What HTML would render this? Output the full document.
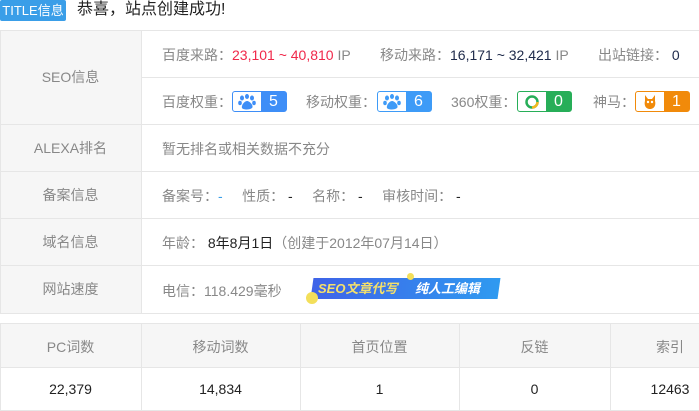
<!DOCTYPE html>
<html><head><meta charset="utf-8"><style>
*{margin:0;padding:0;box-sizing:border-box}
body{width:699px;height:411px;overflow:hidden;background:#fff;font-family:"Liberation Sans","Noto Sans CJK SC",sans-serif;font-size:13px;color:#888;position:relative}
.a{position:absolute;white-space:nowrap}
.hl{position:absolute;left:0;height:1px;background:#e6e6e6}
.vl{position:absolute;width:1px;background:#e6e6e6}
.lab{position:absolute;left:0;width:141px;text-align:center;background:#f6f6f6;color:#888;font-size:14px}
.d{color:#222}
.badge{position:absolute;height:21px;border-radius:3px;display:flex;overflow:hidden}
.badge .ic{width:28px;background:#fff;display:flex;align-items:center;justify-content:center}
.badge .n{flex:1;color:#fff;font-size:16px;text-align:center;line-height:19px}
</style></head><body>
<div class="a" style="left:0;top:0;width:66px;height:21px;background:#3a9ee8;color:#fff;font-size:13px;line-height:21px;text-align:center;border-radius:2px">TITLE信息</div>
<div class="a" style="left:77px;top:-1px;font-size:16px;color:#222;line-height:22px">恭喜，站点创建成功!</div>

<div class="hl" style="top:30px;width:699px"></div>
<div class="lab" style="top:31px;height:93px;line-height:93px">SEO信息</div>
<div class="lab" style="top:125px;height:46px;line-height:46px">ALEXA排名</div>
<div class="lab" style="top:172px;height:46px;line-height:46px">备案信息</div>
<div class="lab" style="top:219px;height:46px;line-height:46px">域名信息</div>
<div class="lab" style="top:266px;height:47px;line-height:47px">网站速度</div>
<div class="vl" style="left:141px;top:30px;height:283px"></div>
<div class="vl" style="left:0;top:30px;height:283px"></div>
<div class="hl" style="top:77px;left:142px;width:557px"></div>
<div class="hl" style="top:124px;width:699px"></div>
<div class="hl" style="top:171px;width:699px"></div>
<div class="hl" style="top:218px;width:699px"></div>
<div class="hl" style="top:265px;width:699px"></div>
<div class="hl" style="top:313px;width:699px"></div>

<div class="a" style="left:162px;top:45px;font-size:14px">百度来路：<span style="color:#f0284a">23,101 ~ 40,810</span> IP</div>
<div class="a" style="left:380px;top:45px;font-size:14px">移动来路：<span class="d" style="color:#1e2a4a">16,171 ~ 32,421</span> IP</div>
<div class="a" style="left:598px;top:45px;font-size:14px">出站链接：<span style="color:#1e2a4a">&nbsp;0</span></div>

<div class="a" style="left:162px;top:92px;font-size:14px">百度权重：</div>
<div class="badge" style="left:232px;top:91px;width:55px;border:1px solid #3e8ef7;background:#3e8ef7"><div class="ic"><svg width="18" height="16" viewBox="0 0 18 16"><g fill="#3e8ef7"><ellipse cx="4" cy="4" rx="2" ry="2.5"/><ellipse cx="9" cy="2.5" rx="2" ry="2.5"/><ellipse cx="14" cy="4" rx="2" ry="2.5"/><ellipse cx="2" cy="9" rx="1.8" ry="2.2"/><ellipse cx="16" cy="9" rx="1.8" ry="2.2"/><path d="M9 7c-3 0-6 5-5 7s8 2 10 0-2-7-5-7z"/></g></svg></div><div class="n">5</div></div>
<div class="a" style="left:306px;top:92px;font-size:14px">移动权重：</div>
<div class="badge" style="left:377px;top:91px;width:55px;border:1px solid #3e9bf7;background:#3e9bf7"><div class="ic"><svg width="18" height="16" viewBox="0 0 18 16"><g fill="#3e9bf7"><ellipse cx="4" cy="4" rx="2" ry="2.5"/><ellipse cx="9" cy="2.5" rx="2" ry="2.5"/><ellipse cx="14" cy="4" rx="2" ry="2.5"/><ellipse cx="2" cy="9" rx="1.8" ry="2.2"/><ellipse cx="16" cy="9" rx="1.8" ry="2.2"/><path d="M9 7c-3 0-6 5-5 7s8 2 10 0-2-7-5-7z"/></g></svg></div><div class="n">6</div></div>
<div class="a" style="left:451px;top:92px;font-size:14px">360权重：</div>
<div class="badge" style="left:517px;top:91px;width:55px;border:1px solid #27ae58;background:#27ae58"><div class="ic"><svg width="16" height="16" viewBox="0 0 16 16"><circle cx="8" cy="8" r="5.5" fill="none" stroke="#27ae58" stroke-width="2.5"/><path d="M8 13.5A5.5 5.5 0 0 0 13.5 8" fill="none" stroke="#f2b81e" stroke-width="2.5"/></svg></div><div class="n">0</div></div>
<div class="a" style="left:593px;top:92px;font-size:14px">神马：</div>
<div class="badge" style="left:635px;top:91px;width:55px;border:1px solid #f18a0a;background:#f18a0a"><div class="ic"><svg width="16" height="18" viewBox="0 0 16 18"><path d="M3 2l3 4h4l3-4v6c1 3 0 8-5 8S2 11 3 8z" fill="#f18a0a"/><circle cx="6" cy="9" r="1.2" fill="#fff"/><circle cx="10" cy="9" r="1.2" fill="#fff"/></svg></div><div class="n">1</div></div>

<div class="a" style="left:162px;top:139px;font-size:14px">暂无排名或相关数据不充分</div>
<div class="a" style="left:162px;top:186px;font-size:14px">备案号：<span style="color:#3a9ee8">-</span>&nbsp;&nbsp;&nbsp;&nbsp;&nbsp;性质：&nbsp;<span class="d">-</span>&nbsp;&nbsp;&nbsp;&nbsp;&nbsp;名称：&nbsp;<span class="d">-</span>&nbsp;&nbsp;&nbsp;&nbsp;&nbsp;审核时间：&nbsp;<span class="d">-</span></div>
<div class="a" style="left:162px;top:233px;font-size:14px">年龄：&nbsp;<span class="d">8年8月1日</span>（创建于2012年07月14日）</div>
<div class="a" style="left:162px;top:281px;font-size:14px">电信：118.429毫秒</div>

<div class="a" style="left:312px;top:278px;width:187px;height:21px;background:linear-gradient(90deg,#3f63e8,#2f9af0);transform:skewX(-8deg)"></div>
<div class="a" style="left:318px;top:279px;font-size:13px;font-weight:bold;font-style:italic;color:#f5e06a;line-height:20px">SEO文章代写</div>
<div class="a" style="left:415px;top:279px;font-size:13px;font-weight:bold;font-style:italic;color:#fff;line-height:20px">纯人工编辑</div>
<div class="a" style="left:306px;top:292px;width:12px;height:12px;border-radius:50%;background:#f3df5a"></div>
<div class="a" style="left:407px;top:273px;width:7px;height:7px;border-radius:50%;background:#f3df5a"></div>

<div class="hl" style="top:323px;width:699px"></div>
<div class="a" style="left:0;top:324px;width:699px;height:43px;background:#f6f6f6"></div>
<div class="hl" style="top:367px;width:699px"></div>
<div class="hl" style="top:410px;width:699px"></div>
<div class="vl" style="left:0;top:323px;height:88px"></div>
<div class="vl" style="left:141px;top:323px;height:88px"></div>
<div class="vl" style="left:300px;top:323px;height:88px"></div>
<div class="vl" style="left:459px;top:323px;height:88px"></div>
<div class="vl" style="left:610px;top:323px;height:88px"></div>
<div class="a" style="left:0;width:141px;top:337px;text-align:center;font-size:14px">PC词数</div>
<div class="a" style="left:141px;width:159px;top:337px;text-align:center;font-size:14px">移动词数</div>
<div class="a" style="left:300px;width:159px;top:337px;text-align:center;font-size:14px">首页位置</div>
<div class="a" style="left:459px;width:151px;top:337px;text-align:center;font-size:14px">反链</div>
<div class="a" style="left:610px;width:120px;top:337px;text-align:center;font-size:14px">索引</div>
<div class="a d" style="left:0;width:141px;top:381px;text-align:center;font-size:14px">22,379</div>
<div class="a d" style="left:141px;width:159px;top:381px;text-align:center;font-size:14px">14,834</div>
<div class="a d" style="left:300px;width:159px;top:381px;text-align:center;font-size:14px">1</div>
<div class="a d" style="left:459px;width:151px;top:381px;text-align:center;font-size:14px">0</div>
<div class="a d" style="left:610px;width:120px;top:381px;text-align:center;font-size:14px">12463</div>
</body></html>
